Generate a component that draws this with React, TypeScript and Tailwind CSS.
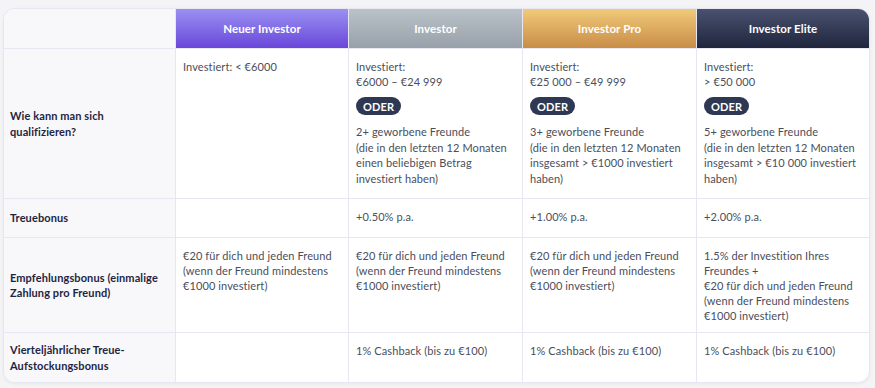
import React from "react";

const tiers = [
  { name: "Neuer Investor", bg: "bg-gradient-to-b from-[#9b8ff2] to-[#6a45d9]" },
  { name: "Investor", bg: "bg-gradient-to-b from-[#bac2c9] to-[#98a1a9]" },
  { name: "Investor Pro", bg: "bg-gradient-to-b from-[#f1ca7a] to-[#c88d47]" },
  { name: "Investor Elite", bg: "bg-gradient-to-b from-[#4a5270] to-[#20263d]" },
];

const Oder = () => (
  <div className="mt-[8px] mb-[9px]">
    <span className="inline-flex h-[18px] items-center rounded-full bg-[#2e3852] px-[7px] text-[11px] font-bold text-white">
      ODER
    </span>
  </div>
);

type Row = {
  label: React.ReactNode;
  cells: React.ReactNode[];
};

const rows: Row[] = [
  {
    label: (
      <>
        Wie kann man sich
        <br />
        qualifizieren?
      </>
    ),
    cells: [
      <p>Investiert: &lt; €6000</p>,
      <>
        <p>
          Investiert:
          <br />
          €6000 – €24 999
        </p>
        <Oder />
        <p className="leading-[15.6px]">
          2+ geworbene Freunde
          <br />
          (die in den letzten 12 Monaten einen beliebigen Betrag investiert
          haben)
        </p>
      </>,
      <>
        <p>
          Investiert:
          <br />
          €25 000 – €49 999
        </p>
        <Oder />
        <p className="leading-[15.6px]">
          3+ geworbene Freunde
          <br />
          (die in den letzten 12 Monaten insgesamt &gt; €1000 investiert haben)
        </p>
      </>,
      <>
        <p>
          Investiert:
          <br />
          &gt; €50 000
        </p>
        <Oder />
        <p className="leading-[15.6px]">
          5+ geworbene Freunde
          <br />
          (die in den letzten 12 Monaten insgesamt &gt; €10 000 investiert
          haben)
        </p>
      </>,
    ],
  },
  {
    label: "Treuebonus",
    cells: [null, "+0.50% p.a.", "+1.00% p.a.", "+2.00% p.a."],
  },
  {
    label: (
      <>
        Empfehlungsbonus (einmalige
        <br />
        Zahlung pro Freund)
      </>
    ),
    cells: [
      "€20 für dich und jeden Freund (wenn der Freund mindestens €1000 investiert)",
      "€20 für dich und jeden Freund (wenn der Freund mindestens €1000 investiert)",
      "€20 für dich und jeden Freund (wenn der Freund mindestens €1000 investiert)",
      <>
        1.5% der Investition Ihres Freundes +
        <br />
        €20 für dich und jeden Freund (wenn der Freund mindestens €1000
        investiert)
      </>,
    ],
  },
  {
    label: (
      <>
        Vierteljährlicher Treue-
        <br />
        Aufstockungsbonus
      </>
    ),
    cells: [
      null,
      "1% Cashback (bis zu €100)",
      "1% Cashback (bis zu €100)",
      "1% Cashback (bis zu €100)",
    ],
  },
];

export default function App() {
  return (
    <div
      className="min-h-[388px] w-[875px] bg-[#f4f4f6] pl-[3px] pt-[8px]"
      style={{ fontFamily: "Lato, 'Noto Sans', sans-serif" }}
    >
      <div className="w-[867px] overflow-hidden rounded-[12px] border border-[#e7e7f1] bg-white shadow-[0_1px_3px_rgba(30,30,60,0.06)]">
        <div className="grid grid-cols-[172px_173px_174px_174px_1fr] grid-rows-[40px_150px_39px_95px_49px]">
          <div className="border-r border-b border-[#e7e7f1] bg-[#f8f8fb]" />
          {tiers.map((t, i) => (
            <div
              key={t.name}
              className={`flex items-center justify-center border-b border-[#e7e7f1] text-[11.5px] font-bold tracking-[0.1px] text-white ${t.bg} ${
                i < 3 ? "border-r" : ""
              }`}
            >
              {t.name}
            </div>
          ))}
          {rows.map((row, ri) => (
            <React.Fragment key={ri}>
              <div
                className={`flex items-center border-r border-[#e7e7f1] bg-[#f8f8fb] px-[6px] text-[11px] leading-[15.5px] font-bold tracking-[0.1px] text-[#1f2541] ${
                  ri < rows.length - 1 ? "border-b" : ""
                }`}
              >
                <div>{row.label}</div>
              </div>
              {row.cells.map((c, ci) => (
                <div
                  key={ci}
                  className={`border-[#e7e7f1] px-[7px] pt-[10px] text-[11px] leading-[15px] tracking-[0.1px] text-[#4a4e5c] ${
                    ci < 3 ? "border-r" : ""
                  } ${ri < rows.length - 1 ? "border-b" : ""}`}
                >
                  {c}
                </div>
              ))}
            </React.Fragment>
          ))}
        </div>
      </div>
    </div>
  );
}
